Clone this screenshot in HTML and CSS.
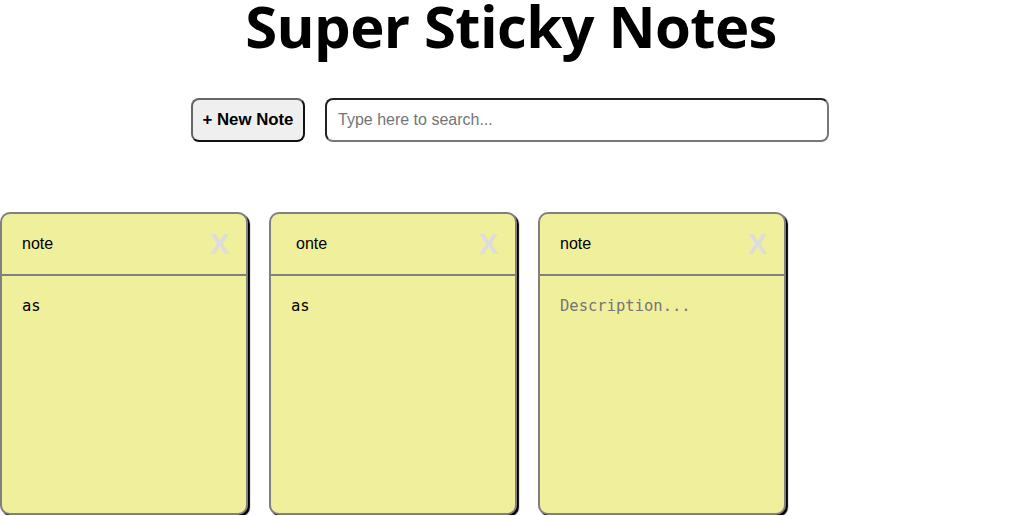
FILE: index.html
```html
<!DOCTYPE html>
<html>
<head>
<meta charset="utf-8">
<title>Super Sticky Notes</title>
<link rel="stylesheet" href="styles.css">
</head>
<body>
<header class="app-header">
  <h1 class="app-title">Super Sticky Notes</h1>
  <div class="controls">
    <button class="add-button">+ New Note</button>
    <input class="search" type="text" placeholder="Type here to search...">
  </div>
</header>
<ul class="notes-list">
  <li class="note">
    <div class="note-head">
      <input class="note-title" type="text" value="note">
      <span class="note-delete">X</span>
    </div>
    <textarea class="note-desc" placeholder="Description...">as</textarea>
  </li>
  <li class="note">
    <div class="note-head">
      <input class="note-title shifted" type="text" value="onte">
      <span class="note-delete">X</span>
    </div>
    <textarea class="note-desc" placeholder="Description...">as</textarea>
  </li>
  <li class="note">
    <div class="note-head">
      <input class="note-title" type="text" value="note">
      <span class="note-delete">X</span>
    </div>
    <textarea class="note-desc" placeholder="Description..."></textarea>
  </li>
</ul>
</body>
</html>
```

FILE: styles.css
```css
html, body {
  margin: 0;
  padding: 0;
  background: #ffffff;
  overflow: hidden;
}

body {
  font-family: "Liberation Sans", Arial, sans-serif;
  color: #000;
}

.app-header {
  display: flex;
  flex-direction: column;
  align-items: center;
}

.app-title {
  margin: 0;
  font-family: "Open Sans", "Noto Sans", sans-serif;
  font-weight: 700;
  font-size: 58px;
  line-height: 52px;
  letter-spacing: -0.6px;
}

.controls {
  display: flex;
  gap: 20px;
  margin-top: 46px;
  margin-right: 2px;
}

.add-button {
  width: 114px;
  height: 44px;
  box-sizing: border-box;
  font-family: "Liberation Sans", Arial, sans-serif;
  font-weight: 700;
  font-size: 16.8px;
  color: #000;
  background: #efefef;
  border: 2px solid;
  border-color: #666 #111 #111 #666;
  border-radius: 8px;
  padding: 0;
}

.search {
  width: 504px;
  height: 44px;
  box-sizing: border-box;
  font-family: "Liberation Sans", Arial, sans-serif;
  font-size: 16px;
  padding: 0 11px;
  border: 2px solid;
  border-color: #222 #777 #777 #222;
  border-radius: 8px;
  outline: none;
}

.search::placeholder {
  color: #757575;
}

.notes-list {
  list-style: none;
  margin: 70px 0 0 0;
  padding: 0;
  display: flex;
  gap: 21px;
}

.note {
  width: 248px;
  height: 303px;
  box-sizing: border-box;
  background: #f0ef9b;
  border: 2px solid #808080;
  border-radius: 10px;
  box-shadow: 2px 2px 1px #000;
  display: flex;
  flex-direction: column;
  flex-shrink: 0;
}

.note-head {
  height: 60px;
  border-bottom: 2px solid #808080;
  display: flex;
  align-items: center;
  padding: 0 17px 0 20px;
}

.note-title {
  flex: 1;
  min-width: 0;
  background: transparent;
  border: none;
  outline: none;
  font-family: "Liberation Sans", Arial, sans-serif;
  font-size: 16px;
  color: #000;
  padding: 0;
}

.note-title.shifted {
  padding-left: 5px;
}

.note-delete {
  font-family: "Liberation Sans", Arial, sans-serif;
  font-weight: 700;
  font-size: 29px;
  color: #dddddd;
  line-height: 1;
}

.note-desc {
  flex: 1;
  background: transparent;
  border: none;
  outline: none;
  resize: none;
  font-family: "DejaVu Sans Mono", monospace;
  font-size: 15.5px;
  color: #000;
  padding: 21px 20px 20px;
  margin: 0;
}

.note-desc::placeholder {
  color: #757575;
}
```
